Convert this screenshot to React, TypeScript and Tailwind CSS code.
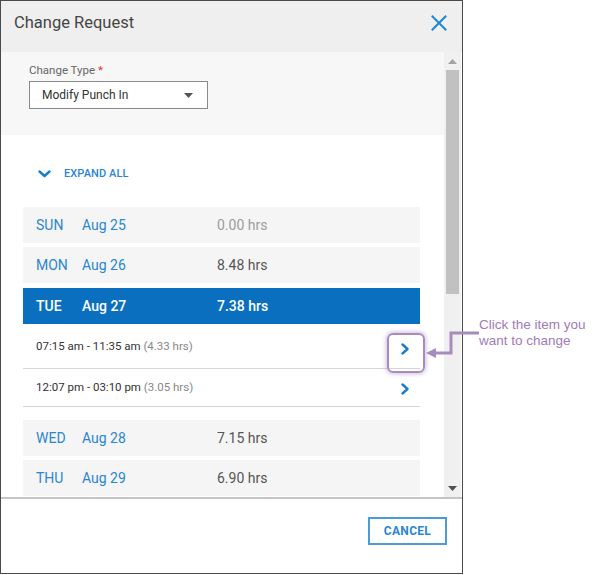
import React from "react";

const blue = "#2a86d1";

function DayRow({ day, date, hrs, hrsColor, active = false, className = "" }: { day: string; date: string; hrs: string; hrsColor?: string; active?: boolean; className?: string }) {
  return (
    <div
      className={`flex items-center h-[36px] w-[397px] text-[14px] ${active ? "bg-[#0b6fc0] text-white font-medium" : "bg-[#f5f5f5]"} ${className}`}
    >
      <span className={`w-[46px] pl-[13px] box-content ${active ? "" : "text-[#2a86d1]"}`}>{day}</span>
      <span className={`w-[135px] ${active ? "" : "text-[#2a86d1]"}`}>{date}</span>
      <span style={active ? undefined : { color: hrsColor }}>{hrs}</span>
    </div>
  );
}

function Chevron() {
  return (
    <svg width="10" height="12" viewBox="0 0 10 12" className="block">
      <path d="M2.5 1.5 L7.5 6 L2.5 10.5" fill="none" stroke="#1a7dcc" strokeWidth="2.4" strokeLinecap="round" strokeLinejoin="round" />
    </svg>
  );
}

export default function App() {
  return (
    <div className="relative w-[600px] h-[575px] bg-white overflow-hidden" style={{ fontFamily: "Roboto, 'Liberation Sans', sans-serif" }}>
      <div className="w-[463px] h-[574px] border-[1.5px] border-[#4a4a4a] flex flex-col">
        {/* Header */}
        <div className="h-[51px] shrink-0 bg-[#efefef] flex items-start justify-between pl-[13px] pr-[14px] pt-[10px]">
          <span className="text-[16.5px] leading-[24px] text-[#454545]">Change Request</span>
          <svg width="16" height="16" viewBox="0 0 16 16" className="mr-[1px] mt-[4px]">
            <path d="M1.5 1.5 L14.5 14.5 M14.5 1.5 L1.5 14.5" stroke="#1e86d3" strokeWidth="2" strokeLinecap="square" />
          </svg>
        </div>
        {/* Body */}
        <div className="h-[447px] shrink-0 flex overflow-hidden border-b-2 border-[#c4c4c4]">
          <div className="w-[443px] shrink-0 flex flex-col overflow-hidden">
            <div className="h-[83px] shrink-0 bg-[#f7f7f7] pl-[28px] pt-[10px]">
              <div className="text-[11.5px] leading-[16px] text-[#666]">
                Change Type <span className="text-[#e03030]">*</span>
              </div>
              <div className="mt-[3px] w-[179px] h-[28px] border border-[#8a8a8a] bg-white flex items-center justify-between pl-[12px] pr-[14px]">
                <span className="text-[12px] text-[#333]">Modify Punch In</span>
                <svg width="9" height="5" viewBox="0 0 9 5">
                  <path d="M0 0 L9 0 L4.5 5 Z" fill="#555" />
                </svg>
              </div>
            </div>
            <div className="pl-[22px] pt-[31px]">
              <div className="flex items-center h-[16px] pl-[15px] gap-[13px]">
                <svg width="13" height="8" viewBox="0 0 13 8">
                  <path d="M1.5 1.5 L6.5 6 L11.5 1.5" fill="none" stroke="#1a7dcc" strokeWidth="2.4" strokeLinecap="round" strokeLinejoin="round" />
                </svg>
                <span className="text-[11px] font-medium tracking-[0.1px]" style={{ color: blue }}>EXPAND ALL</span>
              </div>
              <div className="mt-[25px] flex flex-col">
                <DayRow day="SUN" date="Aug 25" hrs="0.00 hrs" hrsColor="#9c9c9c" />
                <DayRow day="MON" date="Aug 26" hrs="8.48 hrs" hrsColor="#555" className="mt-[4px]" />
                <DayRow day="TUE" date="Aug 27" hrs="7.38 hrs" active className="mt-[5px]" />
                <div className="w-[397px] h-[45px] border-b-[1.5px] border-[#d6d6d6] flex items-center justify-between pl-[13px] pr-[10px] pt-[2px]">
                  <span className="text-[11.5px] text-[#333]">
                    07:15 am - 11:35 am <span className="text-[#888]">(4.33 hrs)</span>
                  </span>
                  <span className="mt-[4px]"><Chevron /></span>
                </div>
                <div className="w-[397px] h-[38px] border-b-[1.5px] border-[#d6d6d6] flex items-center justify-between pl-[13px] pr-[10px]">
                  <span className="text-[11.5px] text-[#333]">
                    12:07 pm - 03:10 pm <span className="text-[#888]">(3.05 hrs)</span>
                  </span>
                  <span className="mt-[2px]"><Chevron /></span>
                </div>
                <DayRow day="WED" date="Aug 28" hrs="7.15 hrs" hrsColor="#555" className="mt-[13px]" />
                <DayRow day="THU" date="Aug 29" hrs="6.90 hrs" hrsColor="#555" className="mt-[4px]" />
              </div>
            </div>
          </div>
          {/* Scrollbar */}
          <div className="w-[17px] shrink-0 bg-[#f0f0f0] flex flex-col items-center">
            <svg width="9" height="5" viewBox="0 0 9 5" className="mt-[7px]">
              <path d="M0 5 L9 5 L4.5 0 Z" fill="#a3a3a3" />
            </svg>
            <div className="mt-[6px] w-[13px] h-[224px] bg-[#c1c1c1]" />
            <div className="flex-1" />
            <svg width="9" height="5" viewBox="0 0 9 5" className="mb-[6px]">
              <path d="M0 0 L9 0 L4.5 5 Z" fill="#505050" />
            </svg>
          </div>
        </div>
        {/* Footer */}
        <div className="flex-1 bg-white flex items-start justify-end pt-[18px] pr-[15px]">
          <button className="w-[79px] h-[28px] border-2 border-[#4b9bd9] text-[12px] font-bold tracking-[0.3px] text-[#2a86d1] flex items-center justify-center">
            CANCEL
          </button>
        </div>
      </div>

      {/* Annotation */}
      <div className="absolute left-[387px] top-[333px] w-[38px] h-[40px] rounded-[6px] border-2 border-[#a88bc0]" style={{ boxShadow: "0 0 4px 1px rgba(168,139,192,0.55)" }} />
      <svg className="absolute left-[423px] top-[328px]" width="60" height="34" viewBox="0 0 60 34">
        <path d="M12 25 L28 25 L28 5 L56 5" fill="none" stroke="#a78bbd" strokeWidth="3" />
        <path d="M3 25 L13 20 L13 30 Z" fill="#a78bbd" />
      </svg>
      <div className="absolute left-[479px] top-[317px] text-[13.5px] leading-[16px] text-[#9f7bb8]" style={{ fontFamily: "'Liberation Sans', Arial, sans-serif" }}>
        Click the item you
        <br />
        want to change
      </div>
    </div>
  );
}
